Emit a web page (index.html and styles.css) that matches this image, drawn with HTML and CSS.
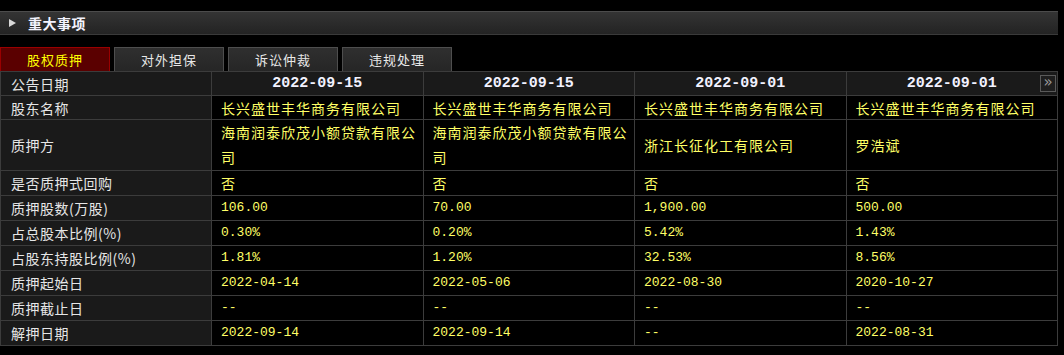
FILE: index.html
```html
<!DOCTYPE html>
<html lang="zh">
<head>
<meta charset="utf-8">
<link rel="stylesheet" href="styles.css">
</head>
<body>
<div class="page">
  <div class="section-bar">
    <span class="tri"></span>
    <span class="section-title">重大事项</span>
  </div>
  <div class="tabs">
    <div class="tab active">股权质押</div>
    <div class="tab">对外担保</div>
    <div class="tab">诉讼仲裁</div>
    <div class="tab">违规处理</div>
  </div>
  <div class="table-wrap">
    <table class="grid">
      <colgroup>
        <col class="c-label"><col class="c-data"><col class="c-data"><col class="c-data"><col class="c-data">
      </colgroup>
      <tr class="r-head">
        <td class="label">公告日期</td>
        <td class="date">2022-09-15</td>
        <td class="date">2022-09-15</td>
        <td class="date">2022-09-01</td>
        <td class="date">2022-09-01</td>
      </tr>
      <tr class="r-name">
        <td class="label">股东名称</td>
        <td class="cn">长兴盛世丰华商务有限公司</td>
        <td class="cn">长兴盛世丰华商务有限公司</td>
        <td class="cn">长兴盛世丰华商务有限公司</td>
        <td class="cn">长兴盛世丰华商务有限公司</td>
      </tr>
      <tr class="r-tall">
        <td class="label">质押方</td>
        <td class="cn">海南润泰欣茂小额贷款有限公司</td>
        <td class="cn">海南润泰欣茂小额贷款有限公司</td>
        <td class="cn">浙江长征化工有限公司</td>
        <td class="cn">罗浩斌</td>
      </tr>
      <tr class="r">
        <td class="label">是否质押式回购</td>
        <td class="cn">否</td><td class="cn">否</td><td class="cn">否</td><td class="cn">否</td>
      </tr>
      <tr class="r">
        <td class="label">质押股数(万股)</td>
        <td class="num">106.00</td><td class="num">70.00</td><td class="num">1,900.00</td><td class="num">500.00</td>
      </tr>
      <tr class="r">
        <td class="label">占总股本比例(%)</td>
        <td class="num">0.30%</td><td class="num">0.20%</td><td class="num">5.42%</td><td class="num">1.43%</td>
      </tr>
      <tr class="r">
        <td class="label">占股东持股比例(%)</td>
        <td class="num">1.81%</td><td class="num">1.20%</td><td class="num">32.53%</td><td class="num">8.56%</td>
      </tr>
      <tr class="r">
        <td class="label">质押起始日</td>
        <td class="num">2022-04-14</td><td class="num">2022-05-06</td><td class="num">2022-08-30</td><td class="num">2020-10-27</td>
      </tr>
      <tr class="r">
        <td class="label">质押截止日</td>
        <td class="num">--</td><td class="num">--</td><td class="num">--</td><td class="num">--</td>
      </tr>
      <tr class="r">
        <td class="label">解押日期</td>
        <td class="num">2022-09-14</td><td class="num">2022-09-14</td><td class="num">--</td><td class="num">2022-08-31</td>
      </tr>
    </table>
    <div class="more-btn">»</div>
  </div>
</div>
</body>
</html>
```

FILE: styles.css
```css
html, body {
  margin: 0;
  padding: 0;
  background: #000;
}
body {
  font-family: "Noto Sans CJK SC", "Liberation Sans", sans-serif;
  color: #e6e6e6;
}
.page {
  width: 1064px;
  height: 355px;
  padding-top: 11px;
  box-sizing: border-box;
  overflow: hidden;
}
.section-bar {
  width: 1058px;
  height: 24px;
  box-sizing: border-box;
  border-top: 1px solid #4c4c4c;
  border-bottom: 1px solid #3a3a3a;
  background: linear-gradient(#343434, #232323);
  display: flex;
  align-items: center;
}
.tri {
  width: 0;
  height: 0;
  margin-left: 9px;
  border-top: 4.5px solid transparent;
  border-bottom: 4.5px solid transparent;
  border-left: 7px solid #d8d8d8;
}
.section-title {
  margin-left: 12px;
  font-size: 14px;
  font-weight: bold;
  color: #f4f4ff;
  letter-spacing: 0.5px;
}
.tabs {
  margin-top: 12px;
  display: flex;
  gap: 4px;
  height: 24px;
}
.tab {
  width: 110px;
  height: 24px;
  box-sizing: border-box;
  border: 1px solid #4e4e4e;
  border-bottom: none;
  background: linear-gradient(#2f2f2f, #262626);
  color: #e8e8e8;
  font-size: 13px;
  line-height: 23px;
  text-align: center;
  letter-spacing: 1px;
}
.tab.active {
  background: #5a0000;
  border-color: #9a0000;
  color: #ffff00;
}
.table-wrap {
  position: relative;
  width: 1057px;
}
.grid {
  width: 1057px;
  border-collapse: collapse;
  table-layout: fixed;
}
.c-label { width: 211px; }
.c-data { width: 211.5px; }
.grid td {
  border: 1px solid #3c3c3c;
  padding: 0 0 0 9px;
  background: #000;
  line-height: 18px;
  vertical-align: middle;
  overflow: hidden;
}
.grid td.label {
  background: #1a1a1a;
  color: #e6e6e6;
  font-size: 14px;
  padding-left: 10px;
  letter-spacing: 0.5px;
}
.r-head td { height: 23px; background: #1a1a1a; }
.r-name td { height: 23px; }
.r-tall td { height: 50px; }
.r td { height: 24px; }
.grid td.date {
  background: #1a1a1a;
  text-align: center;
  padding: 0;
  font-family: "Liberation Mono", monospace;
  font-weight: bold;
  font-size: 15px;
  color: #f2f2ff;
}
.grid td.cn {
  color: #ffff66;
  font-size: 14px;
  letter-spacing: 1px;
  padding-right: 3px;
}
.r-tall td.cn {
  line-height: 25px;
}
.grid td.num {
  color: #ffff66;
  font-family: "Liberation Mono", monospace;
  font-size: 13px;
}
.more-btn {
  position: absolute;
  top: 4px;
  right: 1px;
  width: 16px;
  height: 17px;
  box-sizing: border-box;
  border: 1px solid #5a5a5a;
  background: #1e1e1e;
  color: #9a9a9a;
  font-family: "DejaVu Sans", sans-serif;
  font-size: 15px;
  line-height: 13px;
  text-align: center;
}
```
